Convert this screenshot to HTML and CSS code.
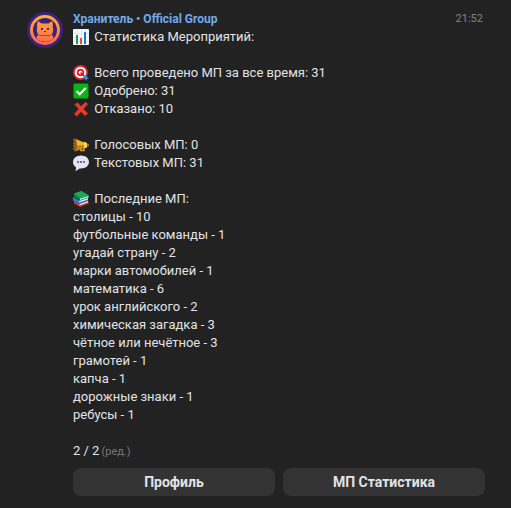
FILE: index.html
```html
<!DOCTYPE html>
<html lang="ru">
<head>
    <meta charset="UTF-8">
    <meta name="viewport" content="width=device-width, initial-scale=1.0">
    <title>Хранитель</title>
    <link rel="stylesheet" href="styles.css">
</head>
<body>

    <main class="message">
        <svg class="avatar" viewBox="0 0 36 36" aria-hidden="true">
            <defs>
                <linearGradient id="glow" gradientUnits="userSpaceOnUse" x1="0" y1="3" x2="0" y2="33">
                    <stop offset="0" stop-color="#ffb03b"/>
                    <stop offset="1" stop-color="#ff6650"/>
                </linearGradient>
            </defs>
            <circle cx="18" cy="18" r="18" fill="#3b2377"/>
            <circle cx="18" cy="18" r="15" fill="url(#glow)"/>
            <circle cx="18" cy="18" r="12" fill="#3b2377"/>
            <path d="M11 9l3.500 2.500h7L25 9c1 2.500 1 4.500.8 6.500.9 3 .2 5.500-1.300 7 1 .8 1.800 2 2 3.800a12 12 0 0 1-17 0c.2-1.800 1-3 2-3.800-1.500-1.500-2.200-4-1.300-7C10 13.500 10 11.500 11 9z" fill="url(#glow)"/>
            <path d="M14 16h2v2h-2zM20 16h2v2h-2zM17 19h2v1h-2z" fill="#5a2a66"/>
            <path d="M12 23.500h12" stroke="#a8434f"/>
        </svg>

        <div class="content">
            <header class="head">
                <a class="author" href="#">Хранитель • Official Group</a>
                <time class="time">21:52</time>
            </header>

            <div class="text">
                <p class="line">
                    <svg class="emoji" viewBox="0 0 16 16" aria-hidden="true">
                        <rect width="16" height="16" rx="1" fill="#f4f9fc"/>
                        <path d="M0 4.500h16M0 8.500h16M0 12.500h16M4.500 0v16M8.500 0v16M12.500 0v16" stroke="#dbe8f0"/>
                        <path d="M3 6h2v9H3z" fill="#16a34a"/>
                        <path d="M7 9h2v6H7z" fill="#f0483e"/>
                        <path d="M11 3h2v12h-2z" fill="#1976d2"/>
                    </svg>
                    Статистика Мероприятий:
                </p>
                <p class="line gap">
                    <svg class="emoji" viewBox="0 0 16 16" aria-hidden="true">
                        <circle cx="7.500" cy="7.500" r="7.500" fill="#e0262e"/>
                        <circle cx="7.500" cy="7.500" r="5.700" fill="#fff"/>
                        <circle cx="7.500" cy="7.500" r="3.800" fill="#e0262e"/>
                        <circle cx="7.500" cy="7.500" r="1.800" fill="#fff"/>
                        <path d="M7.500 7.500l5 5" stroke="#8a1f2c" stroke-width="1.200"/>
                        <path d="M11 11l2-.5 3 3-2 .3-.2 2.200-2.800-3z" fill="#2b8fdc"/>
                    </svg>
                    Всего проведено МП за все время: 31
                </p>
                <p class="line">
                    <svg class="emoji" viewBox="0 0 16 16" aria-hidden="true">
                        <rect x=".5" y=".5" width="15" height="15" rx="1.500" fill="#0bb414"/>
                        <path d="M3.500 8l3.200 3.200L12.700 5" fill="none" stroke="#fff" stroke-width="2"/>
                    </svg>
                    Одобрено: 31
                </p>
                <p class="line">
                    <svg class="emoji" viewBox="0 0 16 16" aria-hidden="true">
                        <path d="M1.500 3.500L4.500 1.500 8 5.300 12.500 1 15 3 10.600 8l4.400 4.500-3 2.500L8 10.700 3.800 15.500 1 13 5.700 8z" fill="#e8382c"/>
                    </svg>
                    Отказано: 10
                </p>
                <p class="line gap">
                    <svg class="emoji" viewBox="0 0 16 16" aria-hidden="true">
                        <path d="M1.500 1.500L11 5.500v5L2 14.500z" fill="#f2b632"/>
                        <path d="M3 8.500l8-.5v2.500L3 14z" fill="#c77f1c"/>
                        <ellipse cx="2.200" cy="8" rx="1.600" ry="6.500" fill="#8d5a16"/>
                        <path d="M.7 2v12" stroke="#2673b8" stroke-dasharray="2 1"/>
                        <path d="M11 4.500l3 1.500v4.500l-3 .7z" fill="#ffd35a"/>
                        <path d="M14 6.500l2 .7v2l-2 .5z" fill="#a8691a"/>
                        <path d="M8 10.500v3h3v-3" fill="none" stroke="#e4a02c" stroke-width="1.500"/>
                    </svg>
                    Голосовых МП: 0
                </p>
                <p class="line">
                    <svg class="emoji" viewBox="0 0 16 16" aria-hidden="true">
                        <path d="M8 .5c4.500 0 8 2.800 8 6.500s-3.500 6.500-8 6.500l-1.500-.1C5.500 14.500 4 15.500 2 15.500c1-1 1.300-2 1-3.200C1 11 0 9.200 0 7 0 3.300 3.500.5 8 .5z" fill="#e3e6f2"/>
                        <path d="M4 6h2v2H4zM7 6h2v2H7zM10 6h2v2h-2z" fill="#6c7590"/>
                    </svg>
                    Текстовых МП: 31
                </p>
                <p class="line gap">
                    <svg class="emoji" viewBox="0 0 16 16" aria-hidden="true">
                        <path d="M1 9.500l5 3.500 9-3.500 1 3-9 3.500-6-3.500z" fill="#d62f35"/>
                        <path d="M6.500 13l8.500-3v1.500l-8.500 3z" fill="#f1dcd2"/>
                        <path d="M0 6l6 3.500L15 6.500v3.200L6 13 0 9.500z" fill="#2185c5"/>
                        <path d="M6 10l9-3v1.500l-9 3z" fill="#dcebf2"/>
                        <path d="M1 2.500L8.500 0 16 4.500v2L7 9.500 1 6z" fill="#087f45"/>
                        <path d="M1 2.500L8.500 0 16 4.500 7 7z" fill="#20a65b"/>
                        <path d="M7 7.500l8.500-2.500v1.200L7 9z" fill="#dcefe4"/>
                    </svg>
                    Последние МП:
                </p>
                <p class="line">столицы - 10</p>
                <p class="line">футбольные команды - 1</p>
                <p class="line">угадай страну - 2</p>
                <p class="line">марки автомобилей - 1</p>
                <p class="line">математика - 6</p>
                <p class="line">урок английского - 2</p>
                <p class="line">химическая загадка - 3</p>
                <p class="line">чётное или нечётное - 3</p>
                <p class="line">грамотей - 1</p>
                <p class="line">капча - 1</p>
                <p class="line">дорожные знаки - 1</p>
                <p class="line">ребусы - 1</p>
                <p class="line gap">2 / 2<span class="edited">(ред.)</span></p>
            </div>

            <div class="keyboard">
                <button class="key" type="button">Профиль</button>
                <button class="key" type="button">МП Статистика</button>
            </div>
        </div>
    </main>

</body>
</html>
```

FILE: styles.css
```css
* {
    box-sizing: border-box;
}

body {
    margin: 0;
    min-height: 100vh;
    background-color: #222222;
    color: #e1e3e6;
    font-family: Roboto, "Noto Sans", sans-serif;
    font-size: 13px;
    line-height: 18px;
}

.message {
    display: flex;
    gap: 10px;
    padding: 10px 26px 12px 27px;
}

.avatar {
    flex: none;
    width: 36px;
    height: 36px;
    margin-top: 2px;
}

.content {
    flex: 1;
    min-width: 0;
}

.head {
    display: flex;
    justify-content: space-between;
}

.author {
    color: #71aaeb;
    font-size: 12px;
    font-weight: 700;
    text-decoration: none;
}

.time {
    padding-right: 2px;
    color: #828282;
    font-size: 11px;
}

.line {
    margin: 0;
}

.gap {
    margin-top: 18px;
}

.emoji {
    width: 16px;
    height: 16px;
    margin-right: 2px;
    vertical-align: -4px;
}

.edited {
    margin-left: 2px;
    color: #767676;
    font-size: 11px;
}

.keyboard {
    display: flex;
    gap: 8px;
    margin-top: 7px;
}

.key {
    flex: 1;
    height: 28px;
    padding: 0;
    border: none;
    border-radius: 8px;
    background-color: #333333;
    color: #e1e3e6;
    font-family: inherit;
    font-size: 14px;
    font-weight: 700;
    line-height: 18px;
    cursor: pointer;
}
```
